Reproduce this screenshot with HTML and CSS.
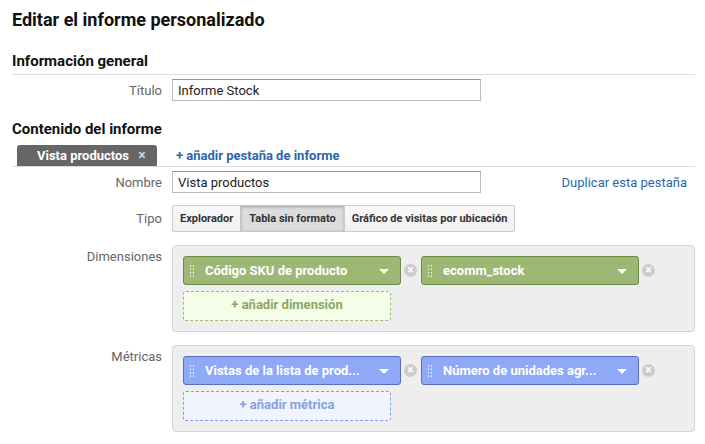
FILE: index.html
```html
<!DOCTYPE html>
<html lang="es">
<head>
<meta charset="utf-8">
<link rel="stylesheet" href="styles.css">
</head>
<body>
<div class="page">
  <h1 class="title">Editar el informe personalizado</h1>

  <h2 class="section section-general">Información general</h2>
  <div class="row row-titulo">
    <label class="label">Título</label>
    <div class="field"><input class="text-input" type="text" value="Informe Stock"></div>
  </div>

  <h2 class="section section-content">Contenido del informe</h2>
  <div class="tabbar">
    <div class="tab">Vista productos <span class="tab-close">×</span></div>
    <a class="add-tab">+ añadir pestaña de informe</a>
  </div>

  <div class="row row-nombre">
    <label class="label">Nombre</label>
    <div class="field field-nombre">
      <input class="text-input" type="text" value="Vista productos">
      <a class="dup-link">Duplicar esta pestaña</a>
    </div>
  </div>

  <div class="row row-tipo">
    <label class="label">Tipo</label>
    <div class="field">
      <div class="btn-group">
        <button class="type-btn">Explorador</button>
        <button class="type-btn selected">Tabla sin formato</button>
        <button class="type-btn">Gráfico de visitas por ubicación</button>
      </div>
    </div>
  </div>

  <div class="row row-box">
    <label class="label label-box">Dimensiones</label>
    <div class="box">
      <div class="pills">
        <div class="pill green"><span class="grip"></span><span class="pill-text">Código SKU de producto</span><span class="caret"></span></div>
        <span class="remove">×</span>
        <div class="pill green"><span class="grip"></span><span class="pill-text">ecomm_stock</span><span class="caret"></span></div>
        <span class="remove">×</span>
      </div>
      <div class="add add-green">+ añadir dimensión</div>
    </div>
  </div>

  <div class="row row-box row-metrics">
    <label class="label label-box">Métricas</label>
    <div class="box">
      <div class="pills">
        <div class="pill blue"><span class="grip"></span><span class="pill-text">Vistas de la lista de prod...</span><span class="caret"></span></div>
        <span class="remove">×</span>
        <div class="pill blue"><span class="grip"></span><span class="pill-text">Número de unidades agr...</span><span class="caret"></span></div>
        <span class="remove">×</span>
      </div>
      <div class="add add-blue">+ añadir métrica</div>
    </div>
  </div>
</div>
</body>
</html>
```

FILE: styles.css
```css
* { box-sizing: border-box; }
html, body { margin: 0; padding: 0; background: #fff; }
body {
  font-family: Roboto, "Liberation Sans", Arial, sans-serif;
  color: #222;
  font-size: 13px;
}
.page { padding: 8px 10px 0 12px; width: 705px; }

.title {
  margin: 0;
  font-size: 18px;
  line-height: 24px;
  font-weight: 700;
  color: #111;
}

.section {
  margin: 0;
  font-size: 15px;
  font-weight: 700;
  color: #111;
  line-height: 20px;
}
.section-general {
  margin-top: 19px;
  padding-bottom: 3px;
  border-bottom: 1px solid #ddd;
}
.section-content {
  margin-top: 18px;
}

.row { display: flex; align-items: center; }
.label {
  width: 150px;
  text-align: right;
  color: #666;
  font-size: 13px;
  margin-right: 10px;
  flex: none;
}
.field { flex: 1; display: flex; align-items: center; }

.text-input {
  width: 309px;
  height: 22px;
  border: 1px solid #bbb;
  border-top-color: #999;
  padding: 0 5px;
  font-family: inherit;
  font-size: 13px;
  color: #222;
  outline: none;
}
.row-titulo { margin-top: 4px; }

.tabbar {
  display: flex;
  align-items: flex-end;
  margin-top: 6px;
  border-bottom: 1px solid #ddd;
  height: 22px;
}
.tab {
  margin-left: 5px;
  width: 140px;
  height: 21px;
  background: #666;
  color: #fff;
  font-weight: 700;
  font-size: 13px;
  border-radius: 3px 3px 0 0;
  padding-left: 20px;
  line-height: 21px;
}
.tab-close {
  color: #ccc;
  font-size: 14px;
  margin-left: 6px;
}
.add-tab {
  margin-left: 19px;
  color: #2b66a8;
  font-weight: 700;
  font-size: 13px;
  line-height: 21px;
}

.row-nombre { margin-top: 4px; }
.field-nombre { justify-content: space-between; }
.dup-link { color: #2b66a8; font-size: 13px; margin-right: 8px; }

.row-tipo { margin-top: 12px; }
.btn-group { display: flex; }
.type-btn {
  height: 27px;
  border: 1px solid #ccc;
  background: linear-gradient(#f8f8f8, #f0f0f0);
  font-family: inherit;
  font-weight: 700;
  font-size: 11px;
  color: #333;
  padding: 0 7px;
  margin: 0;
  margin-left: -1px;
  border-radius: 0;
}
.type-btn:first-child { margin-left: 0; border-radius: 2px 0 0 2px; }
.type-btn:last-child { border-radius: 0 2px 2px 0; }
.type-btn.selected {
  background: #dcdcdc;
  box-shadow: inset 0 1px 3px rgba(0,0,0,0.25);
  border-color: #c4c4c4;
  padding: 0 8px;
}

.row-box { align-items: flex-start; margin-top: 13px; }
.row-metrics { margin-top: 13px; }
.label-box { padding-top: 4px; }
.box {
  width: 523px;
  height: 87px;
  background: #eee;
  border: 1px solid #d4d4d4;
  border-radius: 4px;
  padding: 10px 10px;
}
.pills { display: flex; align-items: center; }
.pill {
  position: relative;
  width: 218px;
  height: 29px;
  border-radius: 3px;
  display: flex;
  align-items: center;
  color: #fff;
  font-weight: 700;
  font-size: 13px;
}
.pill.green { background: #9db874; border: 1px solid #6b8a45; }
.pill.blue { background: #8ea9f8; border: 1px solid #5a6dbb; }
.grip {
  width: 5px;
  height: 14px;
  margin-left: 5px;
  margin-right: 11px;
  background-image: radial-gradient(circle, rgba(255,255,255,0.85) 0.9px, transparent 1.1px);
  background-size: 3px 3.5px;
  flex: none;
}
.pill-text { flex: 1; white-space: nowrap; overflow: hidden; }
.caret {
  width: 0; height: 0;
  border-left: 5px solid transparent;
  border-right: 5px solid transparent;
  border-top: 5px solid #fff;
  margin-right: 11px;
  margin-top: 2px;
}
.remove {
  width: 13px;
  height: 13px;
  border-radius: 50%;
  background: #ccc;
  color: #fff;
  font-size: 12px;
  line-height: 12px;
  text-align: center;
  margin: 0 4px 0 3px;
  flex: none;
  font-weight: 700;
}
.add {
  margin-top: 6px;
  width: 208px;
  height: 30px;
  border-radius: 3px;
  text-align: center;
  line-height: 26px;
  font-weight: 700;
  font-size: 13px;
}
.add-green { background: #f4fde8; border: 1px dashed #9cbb6e; color: #8aa862; }
.add-blue { background: #f0f4fe; border: 1px dashed #7f9ce6; color: #879fe2; }
```
